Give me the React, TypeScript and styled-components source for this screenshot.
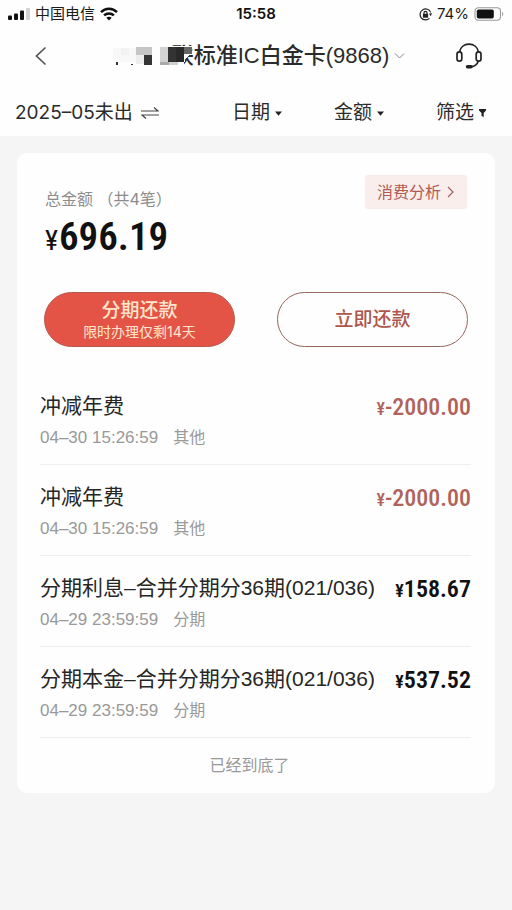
import React from "react";
import styled, { createGlobalStyle } from "styled-components";

const GlobalStyle = createGlobalStyle`
  * { box-sizing: border-box; }
  body {
    margin: 0;
    background: #f5f5f5;
    color: #2b2b2b;
    font-family: Inter, "Noto Sans CJK SC", sans-serif;
  }
  button {
    margin: 0;
    padding: 0;
    border: 0;
    background: none;
    color: inherit;
    font: inherit;
    cursor: pointer;
  }
  svg { display: block; flex: none; }
`;

const Page = styled.div`
  min-height: 100vh;
`;

const Header = styled.header`
  background: #fefefe;
`;

const StatusBar = styled.div`
  display: grid;
  grid-template-columns: 1fr auto 1fr;
  align-items: center;
  height: 28px;
  padding: 0 8px;
  font-size: 15px;
  line-height: 20px;
  color: #1c1c1c;
`;

const StatusGroup = styled.div<{ $end?: boolean }>`
  display: flex;
  align-items: center;
  justify-content: ${(p) => (p.$end ? "flex-end" : "flex-start")};
  gap: 5px;
`;

const Clock = styled.time`
  font-weight: 600;
  color: #111;
`;

const NavBar = styled.nav`
  display: grid;
  grid-template-columns: 64px 1fr 64px;
  align-items: center;
  height: 56px;
  padding: 0 12px;
`;

const NavButton = styled.button<{ $end?: boolean }>`
  display: flex;
  justify-content: ${(p) => (p.$end ? "flex-end" : "flex-start")};
  padding: 0 ${(p) => (p.$end ? "18px" : "20px")};
`;

const CardPicker = styled.button`
  display: flex;
  align-items: center;
  justify-content: center;
  padding-left: 4px;
  font-family: "Liberation Sans", "Noto Sans CJK SC", sans-serif;
  font-size: 22px;
  line-height: 28px;
  font-weight: 500;
  white-space: nowrap;
`;

const Mosaic = styled.svg`
  position: relative;
  margin-right: -20px;
`;

const PickerArrow = styled.svg`
  margin-left: 5px;
`;

const Filters = styled.div`
  display: flex;
  align-items: center;
  gap: 52px;
  height: 52px;
  padding: 6px 26px 0 15px;
`;

const FilterButton = styled.button<{ $first?: boolean }>`
  display: flex;
  align-items: center;
  gap: ${(p) => (p.$first ? "8px" : "5px")};
  margin-right: ${(p) => (p.$first ? "auto" : "0")};
  font-size: 19px;
  line-height: 28px;
  white-space: nowrap;
`;

const Card = styled.main`
  margin: 17px 17px 0;
  padding: 22px 24px 1px 23px;
  border-radius: 10px;
  background: #fefefe;
`;

const Summary = styled.section`
  display: flex;
  justify-content: space-between;
  align-items: flex-start;
  padding: 0 4px 0 5px;
`;

const TotalLabel = styled.div`
  margin-top: 12px;
  font-size: 16px;
  line-height: 24px;
  color: #8c8c8c;
`;

const Total = styled.div`
  display: flex;
  align-items: baseline;
  gap: 1px;
  font-family: "Roboto Condensed", "Liberation Sans Narrow", Roboto, sans-serif;
  font-size: 39px;
  line-height: 52px;
  font-weight: 600;
  color: #111;
`;

const TotalSign = styled.span`
  font-size: 28px;
  font-weight: 400;
`;

const AnalysisButton = styled.button`
  display: flex;
  align-items: center;
  gap: 6px;
  height: 34px;
  padding: 0 12px;
  border-radius: 3px;
  background: #faeeed;
  color: #b05c55;
  font-size: 16px;
  line-height: 24px;
`;

const Actions = styled.div`
  display: grid;
  grid-template-columns: 1fr 1fr;
  gap: 42px;
  margin: 25px 3px 0 4px;
`;

const ActionButton = styled.button<{ $filled?: boolean }>`
  display: flex;
  flex-direction: column;
  align-items: center;
  justify-content: center;
  height: 55px;
  border: 1px solid ${(p) => (p.$filled ? "#b5594f" : "#94665e")};
  border-radius: 28px;
  background: ${(p) => (p.$filled ? "#e45446" : "transparent")};
  color: ${(p) => (p.$filled ? "#fde6cc" : "#ad564c")};
  font-size: 19px;
  line-height: 24px;
  font-weight: 500;
`;

const ActionNote = styled.small`
  font-size: 14px;
  line-height: 18px;
  font-weight: 400;
`;

const List = styled.ul`
  margin: 27px 0 0;
  padding: 0;
  list-style: none;
`;

const Item = styled.li`
  display: flex;
  justify-content: space-between;
  align-items: flex-start;
  height: 91px;
  padding-top: 18px;
  border-bottom: 1px solid #eee;
`;

const ItemTitle = styled.div`
  font-family: "Liberation Sans", "Noto Sans CJK SC", sans-serif;
  font-size: 21px;
  line-height: 28px;
  color: #262626;
  white-space: nowrap;
`;

const ItemMeta = styled.div`
  display: flex;
  gap: 15px;
  margin-top: 6px;
  font-family: "Liberation Sans", "Noto Sans CJK SC", sans-serif;
  font-size: 16px;
  line-height: 24px;
  color: #999;
`;

const Stamp = styled.time`
  font-size: 17px;
`;

const Amount = styled.div<{ $refund: boolean }>`
  display: flex;
  align-items: baseline;
  font-family: "Roboto Condensed", "Liberation Sans Narrow", Roboto, sans-serif;
  font-size: 24px;
  line-height: 30px;
  font-weight: ${(p) => (p.$refund ? 500 : 600)};
  color: ${(p) => (p.$refund ? "#b0625b" : "#111")};
  white-space: nowrap;
`;

const AmountSign = styled.span`
  font-size: 18px;
`;

const EndNote = styled.p`
  margin: 15px 0;
  padding-right: 12px;
  text-align: center;
  font-size: 16px;
  line-height: 24px;
  color: #999;
`;

const items = [
  { title: "冲减年费", stamp: "04–30 15:26:59", kind: "其他", amount: "-2000.00" },
  { title: "冲减年费", stamp: "04–30 15:26:59", kind: "其他", amount: "-2000.00" },
  { title: "分期利息–合并分期分36期(021/036)", stamp: "04–29 23:59:59", kind: "分期", amount: "158.67" },
  { title: "分期本金–合并分期分36期(021/036)", stamp: "04–29 23:59:59", kind: "分期", amount: "537.52" },
];

const SignalIcon = () => (
  <svg width="22" height="12" viewBox="0 0 22 12" aria-hidden="true">
    <rect x="0" y="7.500" width="4" height="4.500" rx="1" fill="#111" />
    <rect x="6" y="5.500" width="4" height="6.500" rx="1" fill="#111" />
    <rect x="12" y="2.500" width="4" height="9.500" rx="1" fill="#111" />
    <rect x="18" y="0" width="4" height="12" rx="1" fill="#d2d2d2" />
  </svg>
);

const WifiIcon = () => (
  <svg width="18" height="14" viewBox="0 0 18 14" fill="none" stroke="#111" strokeWidth="2.5" aria-hidden="true">
    <path d="M1 5.2C5.5 .6 12.5 .6 17 5.2" />
    <path d="M4.1 8.4c2.8-2.7 7-2.7 9.8 0" />
    <path d="M9 13.5 6.3 10.8c1.5-1.3 3.9-1.3 5.4 0z" fill="#111" stroke="none" />
  </svg>
);

const LockIcon = () => (
  <svg width="13" height="13" viewBox="0 0 13 13" fill="none" stroke="#222" strokeWidth="1.2" aria-hidden="true">
    <path d="M11.7 4.4A5.5 5.5 0 1 0 10.500 10.300" />
    <path d="m10 5.600 1.800 2.600 1.200-2.900z" fill="#222" stroke="none" />
    <rect x="3.900" y="5.800" width="5.200" height="3.900" fill="#222" stroke="none" />
    <path d="M5 6V4.8a1.5 1.5 0 0 1 3 0V6" />
  </svg>
);

const BatteryIcon = () => (
  <svg width="30" height="14" viewBox="0 0 30 14" aria-hidden="true">
    <rect x="1" y=".7" width="25.5" height="12.6" rx="3.5" fill="none" stroke="#999" strokeWidth="1.1" />
    <rect x="2.8" y="2.5" width="17" height="9" rx="1.8" fill="#111" />
    <path d="M28.2 4.8c1.5.7 1.5 3.7 0 4.4z" fill="#999" />
  </svg>
);

const HeadsetIcon = () => (
  <svg width="26" height="26" viewBox="0 0 26 26" fill="none" stroke="#222" strokeWidth="1.700" aria-hidden="true">
    <path d="M3.500 9C4.300 4.300 8 1.200 13 1.200S21.700 4.300 22.500 9" />
    <rect x="1" y="8.800" width="4.800" height="9.400" rx="2.400" />
    <rect x="20.200" y="8.800" width="4.800" height="9.400" rx="2.400" />
    <path d="M22.500 18c-1.400 3.600-4 5.400-7.500 5.800" />
    <path d="M11.500 23.800h3.500" strokeWidth="3.400" strokeLinecap="round" />
  </svg>
);

const Caret = () => (
  <svg width="7" height="5" viewBox="0 0 7 5" aria-hidden="true">
    <path d="M0 .5h7L3.500 4.800z" fill="#222" />
  </svg>
);

export default function App() {
  return (
    <Page>
      <GlobalStyle />
      <Header>
        <StatusBar>
          <StatusGroup>
            <SignalIcon />
            <span>中国电信</span>
            <WifiIcon />
          </StatusGroup>
          <Clock>15:58</Clock>
          <StatusGroup $end>
            <LockIcon />
            <span>74%</span>
            <BatteryIcon />
          </StatusGroup>
        </StatusBar>
        <NavBar>
          <NavButton aria-label="返回">
            <svg width="16" height="20" viewBox="0 0 16 20" fill="none" stroke="#555" strokeWidth="1.7" aria-hidden="true">
              <path d="M13.500 1.500 4.500 10l9 8.500" />
            </svg>
          </NavButton>
          <CardPicker>
            <Mosaic width="81" height="20" viewBox="0 0 81 20" shapeRendering="crispEdges" aria-hidden="true">
              <path d="M59 0h22v9h-3l-3 3-2 5v3H59z" fill="#fefefe" />
              <path d="M2 2h23v14H2z" fill="#f8f8f8" />
              <path d="M10 2h8v7h-8z" fill="#f2f2f2" />
              <path d="M25 1h16v8H25z" fill="#c6c6c6" />
              <path d="M25 9h8v9h-8z" fill="#ededed" />
              <path d="M33 9h8v10h-8z" fill="#353535" />
              <path d="M5 16h2v3H5zM20 18h2v1h-2z" fill="#333" />
              <path d="M49 1h8v15h-8z" fill="#d2d2d2" />
              <path d="M57 1h16v15H57z" fill="#333" />
              <path d="M65 1h8v15h-8z" fill="#292929" />
              <path d="M73 1h8v7h-8z" fill="#666" />
              <path d="M49 16h9v3h-9z" fill="#aaa" />
              <path d="M58 16h9v3h-9z" fill="#d0d0d0" />
            </Mosaic>
            联标准IC白金卡(9868)
            <PickerArrow width="11" height="8" viewBox="0 0 11 8" fill="none" stroke="#888" aria-hidden="true">
              <path d="m1 1.500 4.500 4.500L10 1.500" />
            </PickerArrow>
          </CardPicker>
          <NavButton $end aria-label="客服">
            <HeadsetIcon />
          </NavButton>
        </NavBar>
        <Filters>
          <FilterButton $first>
            2025–05未出
            <svg width="18" height="12" viewBox="0 0 18 12" fill="none" stroke="#444" strokeWidth="1.200" aria-hidden="true">
              <path d="M0 4h17l-4-3.500M18 8H1l4 3.500" />
            </svg>
          </FilterButton>
          <FilterButton>日期<Caret /></FilterButton>
          <FilterButton>金额<Caret /></FilterButton>
          <FilterButton>
            筛选
            <svg width="7" height="8" viewBox="0 0 7 8" aria-hidden="true">
              <path d="M0 0h7v1.500L4.700 4v4L2.500 7V4L0 1.500z" fill="#222" />
            </svg>
          </FilterButton>
        </Filters>
      </Header>
      <Card>
        <Summary>
          <div>
            <TotalLabel>总金额 （共4笔）</TotalLabel>
            <Total><TotalSign>¥</TotalSign>696.19</Total>
          </div>
          <AnalysisButton>
            消费分析
            <svg width="8" height="12" viewBox="0 0 8 12" fill="none" stroke="#a0625c" strokeWidth="1.200" aria-hidden="true">
              <path d="m1 1 5 5-5 5" />
            </svg>
          </AnalysisButton>
        </Summary>
        <Actions>
          <ActionButton $filled>
            分期还款
            <ActionNote>限时办理仅剩14天</ActionNote>
          </ActionButton>
          <ActionButton>立即还款</ActionButton>
        </Actions>
        <List>
          {items.map((item, i) => (
            <Item key={i}>
              <div>
                <ItemTitle>{item.title}</ItemTitle>
                <ItemMeta>
                  <Stamp>{item.stamp}</Stamp>
                  <span>{item.kind}</span>
                </ItemMeta>
              </div>
              <Amount $refund={item.amount.startsWith("-")}>
                <AmountSign>¥</AmountSign>
                {item.amount}
              </Amount>
            </Item>
          ))}
        </List>
        <EndNote>已经到底了</EndNote>
      </Card>
    </Page>
  );
}
